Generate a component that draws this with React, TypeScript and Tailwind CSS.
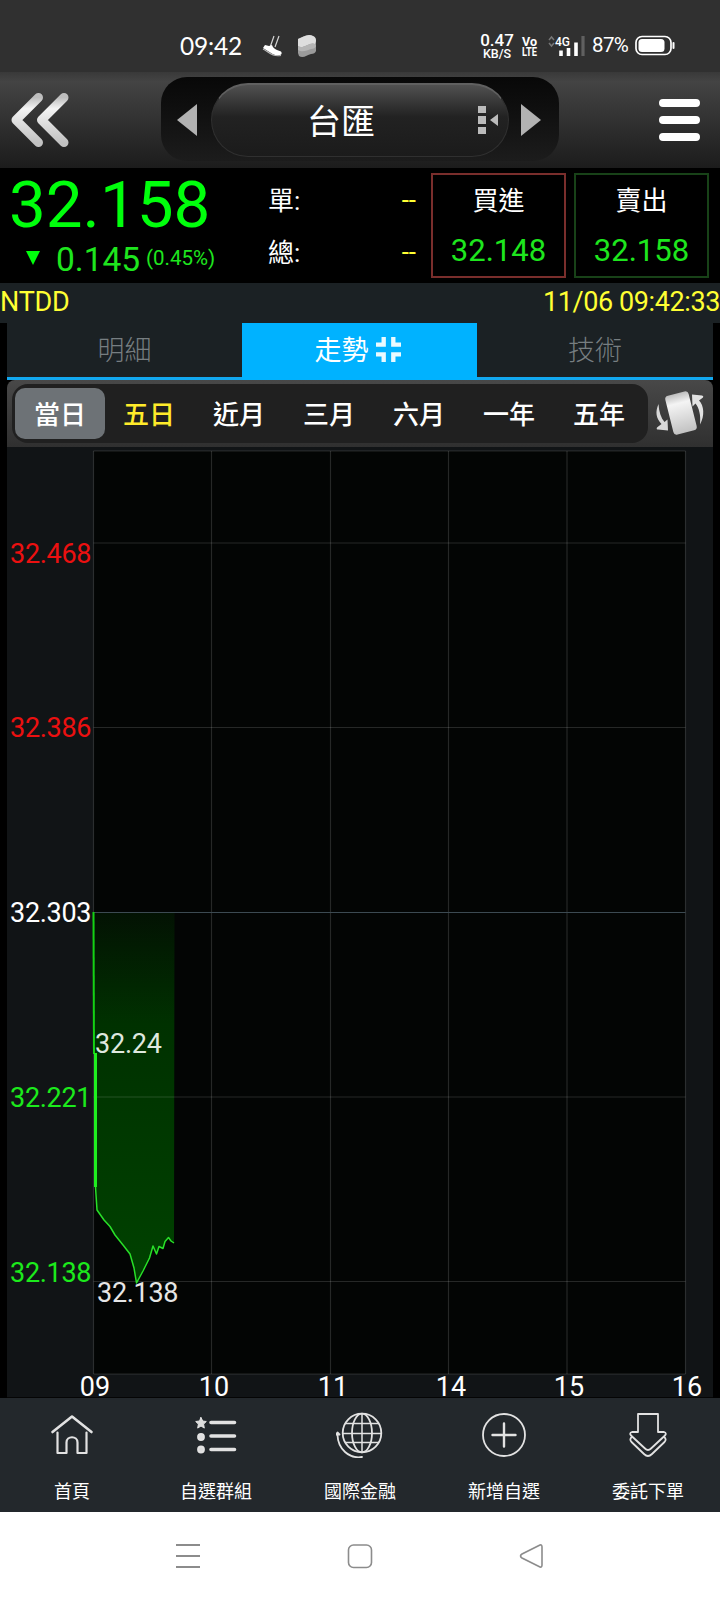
import type { ReactNode } from "react";

const ranges = ["當日", "五日", "近月", "三月", "六月", "一年", "五年"];

const gridX = [93.5, 211.5, 330.5, 448.5, 567, 685.5];
const hours = [
  { label: "09", x: 95 },
  { label: "10", x: 214 },
  { label: "11", x: 333 },
  { label: "14", x: 451 },
  { label: "15", x: 569 },
  { label: "16", x: 687 },
];
const gridY = [451, 543, 727.5, 1097, 1281.5, 1374];
const prices = [
  { label: "32.468", y: 562.5, color: "#ec1010" },
  { label: "32.386", y: 737, color: "#ec1010" },
  { label: "32.303", y: 922, color: "#ffffff" },
  { label: "32.221", y: 1106.5, color: "#1cea1c" },
  { label: "32.138", y: 1281.5, color: "#1cea1c" },
];

const trend =
  "97,1210 104,1220 110,1226.500 115,1235 123,1245 130,1254 134,1268 136.5,1283 143,1271 149.500,1258 153,1246 156.500,1254 159,1246.500 163,1248.500 165,1241.500 168.5,1237.500 171,1241 174,1243";

function StatusBar() {
  return (
    <div className="flex h-[72px] items-center bg-[#303030] pt-[20px] pl-[180px] text-white">
      <span className="w-[65px] font-[Lato] text-[24.5px] leading-none tracking-[-0.2px]">09:42</span>
      <svg className="ml-[16px]" width="22" height="24" viewBox="0 0 22 24">
        <path d="M9.500 12l3.500-10M14 13l4-11" stroke="#d5d5d5" strokeWidth="1.2" fill="none" />
        <path d="M4 11l4 1 3-1c1 3 3 4 5 5l4 1.500c1 1 1 3-1 3.500-3 1-6 0-9-2l-8-5z" fill="#fff" />
        <path d="M2 15c6 3 9 8 18 6.500" stroke="#bbb" strokeWidth="1.200" fill="none" />
      </svg>
      <svg className="ml-[14px]" width="20" height="24" viewBox="0 0 20 24">
        <path d="M1 5C6 3 11-1 16 2q3 1 3 5v10q-1 3-5 3c-4 1-8 5-12 2l-1-3z" fill="#9a9a9a" />
        <path d="M1 5C6 3 11-1 16 2q3 1 3 5l-1 3c-5-3-12 6-17 2z" fill="#dedede" />
        <path d="M1 12c5 4 12-5 17-2l1 2q-1 3-5 3c-4 1-8 4-13 1z" fill="#b5b5b5" />
      </svg>
      <div className="ml-[162px] w-[36px] text-center font-[Roboto] font-medium">
        <div className="text-[17px] leading-[14px]">0.47</div>
        <div className="text-[12.5px] leading-[13px]">KB/S</div>
      </div>
      <svg className="ml-[6px] overflow-visible" width="17" height="24" viewBox="0 0 17 24" fill="#fff" fontFamily="Roboto" fontSize="12.500" fontWeight="700">
        <text x="1" y="11.500" textLength="15" lengthAdjust="spacingAndGlyphs">
          Vo
        </text>
        <text x="1" y="22" textLength="15" lengthAdjust="spacingAndGlyphs">
          LTE
        </text>
      </svg>
      <svg className="ml-[9px]" width="40" height="24" viewBox="0 0 40 24">
        <path d="M2 6l2.5-3L7 6M2 9l2.5 3L7 9" stroke="#777" strokeWidth="1.5" fill="none" />
        <text x="8" y="12" fill="#fff" fontFamily="Roboto" fontSize="13" fontWeight="500" textLength="15" lengthAdjust="spacingAndGlyphs">
          4G
        </text>
        <path d="M14 16.500V22M21.500 14V22M29 8.500V22" stroke="#fff" strokeWidth="3.600" />
        <path d="M36 2V22" stroke="#606060" strokeWidth="3.200" />
      </svg>
      <span className="-mt-[1px] ml-[5px] w-[39px] font-[Roboto] text-[20.5px] leading-none tracking-[-0.6px]">87%</span>
      <svg className="ml-[4px]" width="42" height="22" viewBox="0 0 42 22">
        <rect x="1" y="1.500" width="35" height="18" rx="6" fill="none" stroke="#fff" strokeWidth="1.700" />
        <rect x="3.500" y="4" width="26" height="13" rx="3.500" fill="#fff" />
        <path d="M38.500 8V13" stroke="#fff" strokeWidth="2" strokeLinecap="round" />
      </svg>
    </div>
  );
}

function Header() {
  return (
    <header className="flex h-24 items-start bg-linear-to-b from-[#393939] via-[#444] via-10% to-[#1c1c1c]">
      <svg className="mt-[18px] ml-[9px]" width="62" height="60" viewBox="0 0 62 60">
        <defs>
          <linearGradient id="metal" x1="0" y1="0" x2="0" y2="1">
            <stop offset="0" stopColor="#bdbdbd" />
            <stop offset=".25" stopColor="#f4f4f4" />
            <stop offset="1" stopColor="#c2c2c2" />
          </linearGradient>
        </defs>
        <path
          d="M29.500 7.500L7 30l22.500 22.500M55 7.500L32.500 30 55 52.500"
          stroke="url(#metal)"
          strokeWidth="9"
          strokeLinecap="round"
          strokeLinejoin="round"
          fill="none"
        />
      </svg>
      <div className="mt-[5px] ml-[90px] flex h-[84px] w-[398px] items-center rounded-[26px] bg-linear-to-b from-[#080808] to-[#1c1c1c]">
        <svg className="mt-[2px] ml-[16px]" width="20" height="32" viewBox="0 0 20 32">
          <path d="M20 0v32L0 16z" fill="#b2b2b2" />
        </svg>
        <div className="mt-[2px] ml-[14px] flex h-[74px] w-[298px] items-center rounded-full border border-t-2 border-[#303030] border-t-[#606060] bg-linear-to-b from-[#515151] via-[#222] via-45% to-[#1b1b1b]">
          <span className="mt-[2px] ml-[95px] w-[70px] text-[34px] leading-none text-white">台匯</span>
          <svg className="-mt-[2px] ml-[101px]" width="21" height="30" viewBox="0 0 21 30">
            <path d="M0 1h8v7H0zM0 11h8v8H0zM0 22h8v7H0zM20 9v12l-8-6z" fill="#bbb" />
          </svg>
        </div>
        <svg className="mt-[2px] ml-[12px]" width="20" height="32" viewBox="0 0 20 32">
          <path d="M0 0v32l20-16z" fill="#b2b2b2" />
        </svg>
      </div>
      <svg className="mt-[26px] ml-[99px]" width="44" height="44" viewBox="0 0 44 44">
        <path d="M5 5h33M5 22h33M5 39h33" stroke="#fff" strokeWidth="8" strokeLinecap="round" />
      </svg>
    </header>
  );
}

function PriceBox({ label, price, border }: { label: string; price: string; border: string }) {
  return (
    <div className={`mt-[5px] h-[105px] w-[135px] border-2 text-center ${border}`}>
      <div className="mt-[7px] text-[26px] leading-[38px] text-white">{label}</div>
      <div className="mt-[11px] text-[31px] leading-[40px] text-[#1ee61e]">{price}</div>
    </div>
  );
}

function Quote() {
  return (
    <section className="flex h-[115px] bg-black">
      <div className="w-[268px] pl-[9px] text-[#00ff0c]">
        <div className="pt-[5px] text-[65.5px] leading-[64px]">32.158</div>
        <div className="flex h-[40px] items-center">
          <svg className="mt-[2px] ml-[17px]" width="14" height="14" viewBox="0 0 14 14">
            <path d="M0 0h14L7 14z" fill="#00ff0c" />
          </svg>
          <span className="mt-[6px] ml-[16px] w-[88px] text-[33.5px] leading-none text-[#1ee61e]">0.145</span>
          <span className="mt-[2px] ml-[2px] text-[20.5px] leading-none text-[#1ee61e]">(0.45%)</span>
        </div>
      </div>
      <div className="w-[149px] pt-[14px] text-[26px] leading-[38px]">
        {["單:", "總:"].map((label) => (
          <div key={label} className="mb-[14px] flex h-[38px] justify-between">
            <span className="text-white">{label}</span>
            <span className="-mt-[1px] mr-[1px] text-[#ffff33]">--</span>
          </div>
        ))}
      </div>
      <div className="ml-[14px] flex gap-2">
        <PriceBox label="買進" price="32.148" border="border-[#7a2e2c]" />
        <PriceBox label="賣出" price="32.158" border="border-[#184218]" />
      </div>
    </section>
  );
}

function Tabs() {
  return (
    <div className="mx-[7px] flex h-[57px] border-b-[3px] border-[#12a8f0] bg-[#1b2124] text-[27px] leading-[57px] text-[#777e81]">
      <div className="w-[235px] text-center font-light">明細</div>
      <div className="flex h-[57px] w-[235px] items-start justify-center gap-[7px] bg-[#00b2ff] pr-[4px] text-white">
        <span>走勢</span>
        <svg className="mt-[14px]" width="25" height="25" viewBox="0 0 26 26">
          <path d="M8 0v8H0M18 0v8h8M8 26v-8H0M18 26v-8h8" stroke="#e9faff" strokeWidth="4.500" fill="none" />
        </svg>
      </div>
      <div className="w-[236px] text-center font-light">技術</div>
    </div>
  );
}

function RangeBar() {
  return (
    <div className="mx-[7px] flex h-[67px] rounded-t-lg bg-linear-to-b from-[#484848] to-[#303030]">
      <div className="mt-[4px] ml-[5px] flex h-[59px] w-[636px] rounded-2xl bg-[#202020] pt-[4px] pl-[3px] text-[26px] leading-[55px] font-medium text-white">
        {ranges.map((range, i) => (
          <div
            key={range}
            className={`h-[51px] w-[90px] text-center ${
              i === 0 ? "rounded-[10px] bg-[#6d7276]" : i === 1 ? "pr-[2px] text-[#ffeb2a]" : "pr-[2px]"
            }`}
          >
            {range}
          </div>
        ))}
      </div>
      <svg className="mt-[8px] ml-[6px]" width="52" height="50" viewBox="0 0 52 50">
        <rect x="15" y="5" width="24" height="40" rx="3.500" transform="rotate(-14 27 25)" fill="url(#metal)" />
        <path d="M4.500 16C1 24 2 30 7.500 36L3 39.500q-1 2 1 2l10 1-.5-11-3 2.500C7 30 5 24 4.500 16z" fill="#d8d8d8" />
        <path d="M46 36.500c5-9 4-19-1-24l4-3q1-1.500-1-2l-10-1 .5 12 3-3C45 20 47 27 46 36.500z" fill="#e2e2e2" />
      </svg>
    </div>
  );
}

function Chart() {
  return (
    <svg className="mx-[7px] block h-[951px] w-[706px] overflow-visible bg-[#111416]" viewBox="7 447 706 951" fontFamily="Roboto" fontSize="27">
      <defs>
        <linearGradient id="fall" gradientUnits="userSpaceOnUse" x1="0" y1="912" x2="0" y2="1283">
          <stop offset="0" stopColor="#031203" />
          <stop offset=".3" stopColor="#003100" />
          <stop offset="1" stopColor="#004200" />
        </linearGradient>
      </defs>
      <rect x="93.500" y="451" width="592" height="923" fill="#030504" />
      <polygon points={`94,912 96,1188 ${trend} 174.500,912`} fill="url(#fall)" />
      <g stroke="#ffffff" strokeOpacity=".14" strokeWidth="1.200">
        {gridX.map((x) => (
          <path key={x} d={`M${x} 451V1374`} />
        ))}
        {gridY.map((y) => (
          <path key={y} d={`M93.500 ${y}H685.500`} />
        ))}
      </g>
      <path d="M93.500 912.500H685.500" stroke="#3c4a52" strokeWidth="1.200" />
      <path d="M93.500 912L94 1054" stroke="#14d214" strokeWidth="2" />
      <path d="M95.500 1053V1187" stroke="#1ff01f" strokeWidth="3" />
      <polyline points={`95.500,1187 ${trend}`} fill="none" stroke="#28e028" strokeWidth="1.500" strokeLinejoin="round" />
      {prices.map(({ label, y, color }) => (
        <text key={label} x="10" y={y} fill={color} textLength="81.500">
          {label}
        </text>
      ))}
      <text x="95" y="1053" fill="#dfe8df" textLength="67">
        32.24
      </text>
      <text x="97" y="1301.500" fill="#e6e6e6" textLength="81.500">
        32.138
      </text>
      {hours.map(({ label, x }) => (
        <text key={label} x={x} y="1395.500" fill="#fff" textAnchor="middle">
          {label}
        </text>
      ))}
      <path d="M7 1397.500H713" stroke="#050505" />
    </svg>
  );
}

function NavItem({ label, children }: { label: string; children: ReactNode }) {
  return (
    <div className="flex w-36 flex-col items-center pt-[12px] text-white">
      <svg width="48" height="48" viewBox="0 0 48 48" fill="none" stroke="#e2e2e2" strokeWidth="1.8" strokeLinecap="round" strokeLinejoin="round">
        {children}
      </svg>
      <span className="mt-[21px] text-[18px] leading-[26px]">{label}</span>
    </div>
  );
}

function BottomNav() {
  return (
    <nav className="flex h-[114px] bg-[#23282c]">
      <NavItem label="首頁">
        <path d="M4.500 22L24 6.500 43.500 22" strokeWidth="2.600" />
        <path d="M9.500 22.500V43h9V32.500c0-7 11-7 11 0V43h9V22.500" strokeWidth="2.200" />
      </NavItem>
      <NavItem label="自選群組">
        <path d="M9 7.500l1.700 3.500 3.600.5-2.700 2.600.7 4L9 16l-3.300 2.100.7-4-2.700-2.600 3.600-.5z" fill="#ddd" strokeWidth="1" />
        <circle cx="9" cy="27" r="3" fill="#ddd" />
        <circle cx="9" cy="39.500" r="3" fill="#ddd" />
        <path d="M19 12.500h23.500M19 26h23.500M19 39.500h23.500" strokeWidth="3.600" />
      </NavItem>
      <NavItem label="國際金融">
        <circle cx="26" cy="23" r="19.300" />
        <ellipse cx="26" cy="23" rx="10" ry="19.300" />
        <path d="M26 4v38M7 23.500h38M9.500 13.500h33M9.500 32.500h33" strokeWidth="1.500" />
        <path d="M1.500 25C2 39 13 49 26 47" />
        <path d="M0 24.500l1.500-2 2 2z" fill="#ddd" />
      </NavItem>
      <NavItem label="新增自選">
        <circle cx="24" cy="25" r="21" />
        <path d="M24 13.500v23M12.500 25h23" strokeWidth="2.400" />
      </NavItem>
      <NavItem label="委託下單">
        <path d="M14 4h20v18h6q3 1 1 3.500L27 38.500q-3 3-6 0L7 25.500q-2-2.500 1-3.500h6z" />
        <path d="M8 27q-3 2-.5 5L20 44q4 4 8 0l12.500-12q2.500-3-.5-5" />
      </NavItem>
    </nav>
  );
}

function SystemNav() {
  return (
    <div className="flex h-[88px] items-start justify-center gap-[146px] bg-white pt-[31px]">
      <svg width="26" height="26" viewBox="0 0 26 26" stroke="#8c8c8c" strokeWidth="1.8">
        <path d="M1 2h24M1 13h24M1 24h24" />
      </svg>
      <svg width="26" height="26" viewBox="0 0 26 26" fill="none" stroke="#8c8c8c" strokeWidth="1.600">
        <rect x="1.500" y="2" width="23" height="22.500" rx="5" />
      </svg>
      <svg width="26" height="26" viewBox="0 0 26 26" fill="none" stroke="#8c8c8c" strokeWidth="1.600">
        <path d="M21 2L3 11q-3 2 0 4l18 9q2 .5 2-2V4q0-2.500-2-2z" />
      </svg>
    </div>
  );
}

export default function App() {
  return (
    <div className="h-[1600px] w-[720px] overflow-hidden bg-black font-[Roboto,'Noto_Sans_CJK_TC',sans-serif]">
      <StatusBar />
      <Header />
      <Quote />
      <div className="flex h-10 justify-between bg-[#1b2124] text-[27px] leading-[39px] text-[#ffff33]">
        <span className="tracking-[-0.2px]">NTDD</span>
        <span className="tracking-[-0.4px]">11/06 09:42:33</span>
      </div>
      <Tabs />
      <RangeBar />
      <Chart />
      <BottomNav />
      <SystemNav />
    </div>
  );
}
